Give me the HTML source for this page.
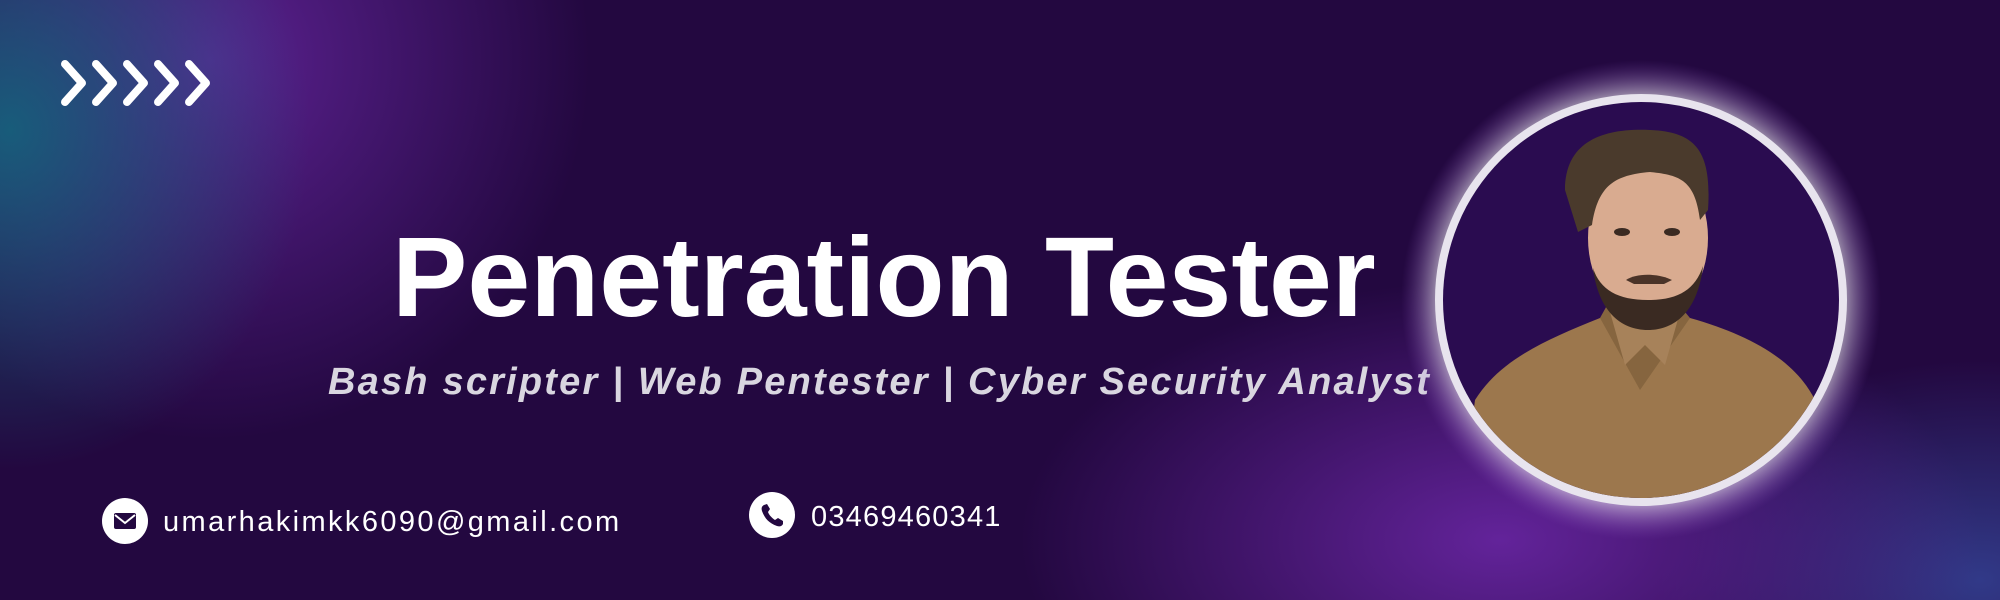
<!DOCTYPE html>
<html><head><meta charset="utf-8"><style>
html,body{margin:0;padding:0}
body{width:2000px;height:600px;overflow:hidden;position:relative;background:#230840;font-family:"Liberation Sans",sans-serif}
.bg{position:absolute;inset:0;background:
radial-gradient(ellipse 300px 340px at 10px 130px, rgba(20,100,125,.9), rgba(20,100,125,0) 100%),
radial-gradient(ellipse 380px 380px at 210px 60px, rgba(95,35,150,.95), rgba(95,35,150,0) 100%),
radial-gradient(ellipse 480px 260px at 1500px 540px, rgba(110,40,170,.85), rgba(110,40,170,0) 100%),
radial-gradient(ellipse 320px 220px at 1980px 580px, rgba(50,60,140,.95), rgba(50,60,140,0) 100%),
#230840}
.title{position:absolute;left:392px;top:221px;font-size:113px;font-weight:bold;color:#fff;white-space:nowrap;line-height:1}
.sub{position:absolute;left:328px;top:363px;font-size:38px;font-weight:bold;font-style:italic;color:#d9d6e0;white-space:nowrap;letter-spacing:2.2px;line-height:1}
.ic{position:absolute;width:46px;height:46px;border-radius:50%;background:#fff}
.txt{position:absolute;font-size:29px;color:#fff;white-space:nowrap;line-height:1}
</style></head><body>
<div class="bg"></div>
<svg style="position:absolute;left:0;top:0" width="300" height="150">
<g fill="none" stroke="#fff" stroke-width="8" stroke-linecap="round" stroke-linejoin="round">
<path d="M65 64 L82 83 L65 102"/><path d="M96 64 L113 83 L96 102"/><path d="M127 64 L144 83 L127 102"/><path d="M158 64 L175 83 L158 102"/><path d="M189 64 L206 83 L189 102"/>
</g></svg>
<div class="title">Penetration Tester</div>
<div class="sub">Bash scripter | Web Pentester | Cyber Security Analyst</div>
<div class="ic" style="left:102px;top:498px"></div>
<svg style="position:absolute;left:102px;top:498px" width="46" height="46"><rect x="12" y="15" width="22" height="16" rx="2" fill="#230840"/><path d="M13 17 L23 25 L33 17" fill="none" stroke="#fff" stroke-width="2"/></svg>
<div class="txt" style="left:163px;top:508px;letter-spacing:2.4px">umarhakimkk6090@gmail.com</div>
<div class="ic" style="left:749px;top:492px"></div>
<svg style="position:absolute;left:749px;top:492px" width="46" height="46"><path d="M15 13 C13 14 12 16 13 19 C16 27 20 31 28 34 C31 35 33 34 34 32 L34 29 L29 26 L26 28 C23 26 20 23 19 20 L21 17 L18 12 Z" fill="#230840"/></svg>
<div class="txt" style="left:811px;top:503px;letter-spacing:1.2px">03469460341</div>
<svg style="position:absolute;left:1380px;top:40px" width="520" height="520" viewBox="1380 40 520 520">
<defs>
<radialGradient id="glow" cx="1641" cy="300" r="240" gradientUnits="userSpaceOnUse">
<stop offset="0.84" stop-color="#ffffff" stop-opacity=".6"/><stop offset="1" stop-color="#8a50c0" stop-opacity="0"/></radialGradient>
<clipPath id="c"><circle cx="1641" cy="300" r="198"/></clipPath>
</defs>
<circle cx="1641" cy="300" r="240" fill="url(#glow)"/>
<circle cx="1641" cy="300" r="206" fill="#e8e4ee"/>
<circle cx="1641" cy="300" r="198" fill="#2a0c50"/>
<g clip-path="url(#c)">
<path d="M1475 400 C1500 360 1545 340 1600 318 L1690 318 C1750 335 1795 360 1815 400 L1830 520 L1460 520 Z" fill="#9c774d"/>
<path d="M1600 318 L1640 390 L1690 318 L1675 300 L1610 300 Z" fill="#86653f"/>
<path d="M1608 305 L1625 365 L1645 345 L1665 365 L1682 305 Z" fill="#a7825a"/>
<rect x="1626" y="255" width="40" height="70" fill="#c99a7c"/>
<ellipse cx="1648" cy="238" rx="60" ry="82" fill="#d9ab90"/>
<path d="M1593 268 C1598 310 1620 330 1648 330 C1676 330 1698 310 1703 266 C1695 290 1678 300 1648 300 C1618 300 1600 290 1593 268 Z" fill="#3a2a22"/>
<path d="M1626 280 C1636 273 1658 273 1672 280 L1664 284 L1634 284 Z" fill="#4a3328"/>
<path d="M1565 190 C1565 140 1605 128 1650 130 C1695 132 1712 150 1708 210 L1700 220 C1695 180 1680 175 1650 172 C1615 175 1598 185 1592 225 L1578 232 Z" fill="#4a3a2c"/>
<ellipse cx="1622" cy="232" rx="8" ry="4" fill="#3a2a22"/><ellipse cx="1672" cy="232" rx="8" ry="4" fill="#3a2a22"/>
</g>
</svg>
</body></html>
